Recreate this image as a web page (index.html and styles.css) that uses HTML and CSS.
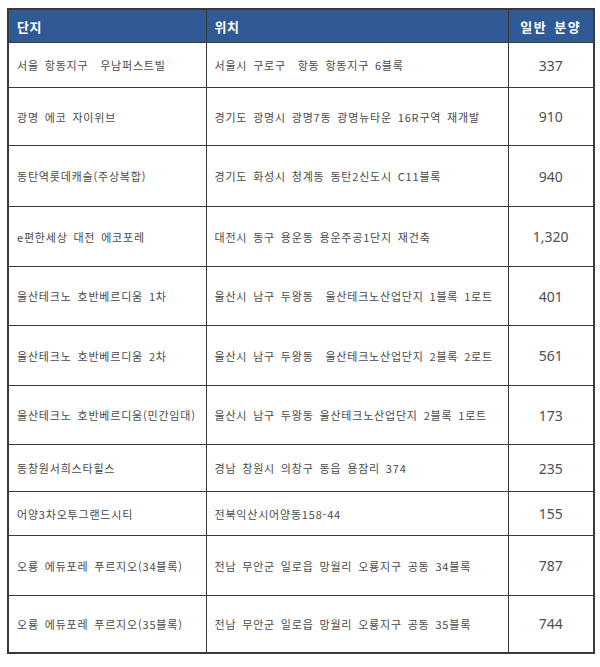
FILE: index.html
```html
<!DOCTYPE html>
<html lang="ko">
<head>
<meta charset="utf-8">
<link rel="stylesheet" href="styles.css">
</head>
<body>
<table class="supply">
  <colgroup>
    <col class="c-name">
    <col class="c-loc">
    <col class="c-num">
  </colgroup>
  <thead>
    <tr class="head">
      <th>단지</th>
      <th>위치</th>
      <th class="num">일반 분양</th>
    </tr>
  </thead>
  <tbody>
    <tr class="h45"><td>서울 항동지구&nbsp; 우남퍼스트빌</td><td>서울시 구로구&nbsp; 항동 항동지구 6블록</td><td class="num">337</td></tr>
    <tr class="h58"><td>광명 에코 자이위브</td><td>경기도 광명시 광명7동 광명뉴타운 16R구역 재개발</td><td class="num">910</td></tr>
    <tr class="h61"><td>동탄역롯데캐슬(주상복합)</td><td>경기도 화성시 청계동 동탄2신도시 C11블록</td><td class="num">940</td></tr>
    <tr class="h60"><td>e편한세상 대전 에코포레</td><td>대전시 동구 용운동 용운주공1단지 재건축</td><td class="num">1,320</td></tr>
    <tr class="h59"><td>울산테크노 호반베르디움 1차</td><td>울산시 남구 두왕동&nbsp; 울산테크노산업단지 1블록 1로트</td><td class="num">401</td></tr>
    <tr class="h60"><td>울산테크노 호반베르디움 2차</td><td>울산시 남구 두왕동&nbsp; 울산테크노산업단지 2블록 2로트</td><td class="num">561</td></tr>
    <tr class="h59"><td>울산테크노 호반베르디움(민간임대)</td><td>울산시 남구 두왕동 울산테크노산업단지 2블록 1로트</td><td class="num">173</td></tr>
    <tr class="h47"><td>동창원서희스타힐스</td><td>경남 창원시 의창구 동읍 용잠리 374</td><td class="num">235</td></tr>
    <tr class="h44"><td>어양3차오투그랜드시티</td><td>전북익산시어양동158-44</td><td class="num">155</td></tr>
    <tr class="h60"><td>오룡 에듀포레 푸르지오(34블록)</td><td>전남 무안군 일로읍 망월리 오룡지구 공동 34블록</td><td class="num">787</td></tr>
    <tr class="h57"><td>오룡 에듀포레 푸르지오(35블록)</td><td>전남 무안군 일로읍 망월리 오룡지구 공동 35블록</td><td class="num">744</td></tr>
  </tbody>
</table>
</body>
</html>
```

FILE: styles.css
```css
html, body {
  margin: 0;
  padding: 0;
  background: #ffffff;
}

body {
  padding: 8px 0 0 7px;
}

.supply {
  border-collapse: collapse;
  table-layout: fixed;
  width: 586px;
  border: 2px solid #3a3a3a;
  font-family: "Noto Sans CJK KR", "Noto Sans", sans-serif;
}

.c-name { width: 198px; }
.c-loc { width: 302px; }
.c-num { width: 86px; }

.supply th {
  background: #2f5a96;
  color: #ffffff;
  font-size: 13px;
  font-weight: bold;
  text-align: left;
  height: 32px;
  padding: 0 0 0 8px;
  border: 1.5px solid #3a3a3a;
  letter-spacing: 0.5px;
}

.supply th.num {
  text-align: center;
  padding: 0;
  letter-spacing: 1.5px;
  word-spacing: 2px;
}

.supply td {
  font-size: 11px;
  color: #4a4a4a;
  padding: 0 0 0 8px;
  border: 1.5px solid #3a3a3a;
  letter-spacing: 0.8px;
  word-spacing: 2px;
  white-space: nowrap;
  vertical-align: middle;
}

.supply td.num {
  text-align: center;
  padding: 0;
  font-family: "Noto Sans", "Liberation Sans", sans-serif;
  font-size: 14px;
  letter-spacing: 0;
  color: #4f4f4f;
}

.h44 { height: 44px; }
.h45 { height: 45px; }
.h47 { height: 47px; }
.h57 { height: 57px; }
.h58 { height: 58px; }
.h59 { height: 59px; }
.h60 { height: 60px; }
.h61 { height: 61px; }
```
